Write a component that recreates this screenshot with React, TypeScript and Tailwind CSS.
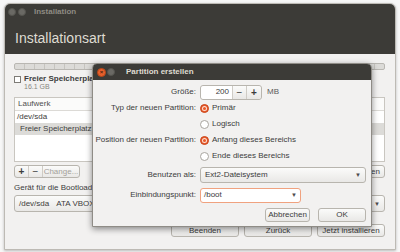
import { Fragment } from 'react';

const btn =
  'flex items-center justify-center rounded-[3px] border border-[#b8b5ae] bg-gradient-to-b from-[#fbfbfa] to-[#e9e8e6] text-[#3c3c3c]';

function Radio({ checked }: { checked?: boolean }) {
  return checked ? (
    <span className="w-[9px] h-[9px] rounded-full bg-[#e9592a] border border-[#c9481d] flex items-center justify-center">
      <span className="w-[5px] h-[5px] rounded-full bg-[#fbe3d8] flex items-center justify-center">
        <span className="w-[3px] h-[3px] rounded-full bg-[#e9592a]" />
      </span>
    </span>
  ) : (
    <span className="w-[9px] h-[9px] rounded-full bg-white border border-[#a8a59f]" />
  );
}

function Arrow() {
  return <span className="text-[6px] text-[#4c4c4c] leading-none">▼</span>;
}

export default function App() {
  const rows: { label: string; content: React.ReactNode }[] = [
    {
      label: 'Typ der neuen Partition:',
      content: (
        <div className="flex items-center gap-[3px]">
          <Radio checked />
          <span>Primär</span>
        </div>
      ),
    },
    {
      label: '',
      content: (
        <div className="flex items-center gap-[3px]">
          <Radio />
          <span>Logisch</span>
        </div>
      ),
    },
    {
      label: 'Position der neuen Partition:',
      content: (
        <div className="flex items-center gap-[3px]">
          <Radio checked />
          <span>Anfang dieses Bereichs</span>
        </div>
      ),
    },
    {
      label: '',
      content: (
        <div className="flex items-center gap-[3px]">
          <Radio />
          <span>Ende dieses Bereichs</span>
        </div>
      ),
    },
  ];

  return (
    <div className="relative w-[400px] h-[252px] bg-[#f7f7f7] pt-[3px] px-[4px] font-['Liberation_Sans',Arial,sans-serif] text-[8px] text-[#3c3c3c]">
      {/* main window */}
      <div className="w-[392px] h-[247px] rounded-t-[6px] border border-[#bdbab4] bg-[#f2f1f0] flex flex-col overflow-hidden shadow-[0_1px_3px_rgba(0,0,0,0.25)]">
        <div className="h-[50px] bg-[#3c3b37] px-[3px] pt-[3px] shrink-0">
          <div className="flex items-center h-[10px]">
            <span className="w-[8px] h-[8px] rounded-full bg-[#6a6964] border border-[#55544f]" />
            <span className="w-[8px] h-[8px] rounded-full bg-[#6a6964] border border-[#55544f] ml-[2px]" />
            <span className="ml-[8px] text-[8px] font-bold text-[#8e8b83]">Installation</span>
          </div>
          <div className="mt-[13px] ml-[7px] text-[14px] leading-[16px] text-[#dfdbd2]">Installationsart</div>
        </div>

        <div className="flex-1 flex flex-col pl-[9px] pr-[10px] pt-[9px]">
          <div className="h-[7px] rounded-[2px] border border-[#b9b7b2] bg-[repeating-linear-gradient(90deg,#dcdbd8_0,#dcdbd8_9px,#c6c4bf_9px,#c6c4bf_10px)]" />

          <div className="mt-[5px] h-[8px] flex items-center gap-[3px]">
            <span className="w-[7px] h-[7px] border border-[#7d7b76] bg-white" />
            <span className="font-bold text-[#3c3c3c]">Freier Speicherplatz</span>
          </div>
          <div className="h-[8px] pl-[10px] text-[7px] leading-[8px] text-[#8a8781]">16.1 GB</div>

          <div className="mt-[6px] h-[65px] border border-[#c9c6c0] bg-white flex flex-col">
            <div className="h-[13px] flex items-center px-[3px] border-b border-[#dcdad6] bg-[#fbfbfa] text-[#505050]">Laufwerk</div>
            <div className="h-[12px] flex items-center px-[2px]">/dev/sda</div>
            <div className="h-[12px] flex items-center pl-[5px] bg-[#dcdbd8]">Freier Speicherplatz</div>
          </div>

          <div className="mt-[3px] h-[13px] flex justify-between">
            <div className="flex rounded-[3px] border border-[#b8b5ae] bg-gradient-to-b from-[#fbfbfa] to-[#e9e8e6]">
              <span className="w-[14px] flex items-center justify-center text-[10px] font-bold text-[#3c3c3c] border-r border-[#cfccc6]">+</span>
              <span className="w-[14px] flex items-center justify-center text-[10px] text-[#3c3c3c] border-r border-[#cfccc6]">−</span>
              <span className="w-[36px] flex items-center justify-center text-[#a3a09a]">Change...</span>
            </div>
            <div className={`${btn} w-[58px]`}>Zurücksetzen</div>
          </div>

          <div className="mt-[5px] h-[9px] flex items-center">Gerät für die Bootloader-Installation:</div>

          <div className={`${btn} mt-[3px] h-[17px] justify-between! px-[4px]`}>
            <span>
              /dev/sda<span className="ml-[7px]">ATA VBOX HARDDISK (8.6 GB)</span>
            </span>
            <Arrow />
          </div>

          <div className="mt-[12px] h-[13px] flex justify-end gap-[5px]">
            <div className={`${btn} w-[68px]`}>Beenden</div>
            <div className={`${btn} w-[68px]`}>Zurück</div>
            <div className={`${btn} w-[68px]`}>Jetzt installieren</div>
          </div>
        </div>
      </div>

      {/* dialog */}
      <div className="absolute left-[92px] top-[63px] w-[280px] h-[164px] rounded-t-[5px] bg-[#f2f1f0] border border-[#8f8c86] shadow-[0_2px_6px_rgba(0,0,0,0.45)] flex flex-col overflow-hidden">
        <div className="h-[16px] bg-[#3c3b37] flex items-center px-[4px] shrink-0">
          <span className="w-[9px] h-[9px] rounded-full bg-[#e8602c] border border-[#b84618] flex items-center justify-center text-[6px] leading-none font-bold text-[#4a2010]">×</span>
          <span className="w-[8px] h-[8px] rounded-full bg-[#6a6964] border border-[#55544f] ml-[1px]" />
          <span className="ml-[11px] font-bold text-[#dfdbd2]">Partition erstellen</span>
        </div>

        <div className="pt-[4px] pr-[5px] grid grid-cols-[103px_1fr] gap-x-[4px] items-center">
          <div className="h-[16px] flex items-center justify-end">Größe:</div>
          <div className="h-[16px] flex items-center">
            <div className="flex h-[15px] rounded-[3px] border border-[#b8b5ae]">
              <span className="w-[32px] bg-white flex items-center justify-end pr-[3px] rounded-l-[3px] border-r border-[#cfccc6]">200</span>
              <span className="w-[14px] flex items-center justify-center text-[10px] bg-gradient-to-b from-[#fbfbfa] to-[#e9e8e6] border-r border-[#cfccc6]">−</span>
              <span className="w-[14px] flex items-center justify-center text-[10px] font-bold bg-gradient-to-b from-[#fbfbfa] to-[#e9e8e6] rounded-r-[3px]">+</span>
            </div>
            <span className="ml-[5px] text-[#5a5a5a]">MB</span>
          </div>

          {rows.map((r, i) => (
            <Fragment key={i}>
              <div className="h-[16px] flex items-center justify-end whitespace-nowrap">{r.label}</div>
              <div className="h-[16px] flex items-center">{r.content}</div>
            </Fragment>
          ))}

          <div className="mt-[3px] h-[16px] flex items-center justify-end">Benutzen als:</div>
          <div className={`${btn} mt-[3px] h-[16px] justify-between! px-[4px]`}>
            <span>Ext2-Dateisystem</span>
            <Arrow />
          </div>

          <div className="mt-[4px] h-[16px] flex items-center justify-end">Einbindungspunkt:</div>
          <div className="mt-[4px] h-[16px] flex items-center">
            <div className="w-[101px] h-[15px] rounded-[3px] border border-[#f0a27f] bg-white flex items-center justify-between px-[3px]">
              <span>/boot</span>
              <Arrow />
            </div>
          </div>
        </div>

        <div className="mt-[5px] pr-[5px] flex justify-end gap-[8px]">
          <div className={`${btn} w-[45px] h-[14px]`}>Abbrechen</div>
          <div className={`${btn} w-[48px] h-[14px]`}>OK</div>
        </div>
      </div>
    </div>
  );
}
